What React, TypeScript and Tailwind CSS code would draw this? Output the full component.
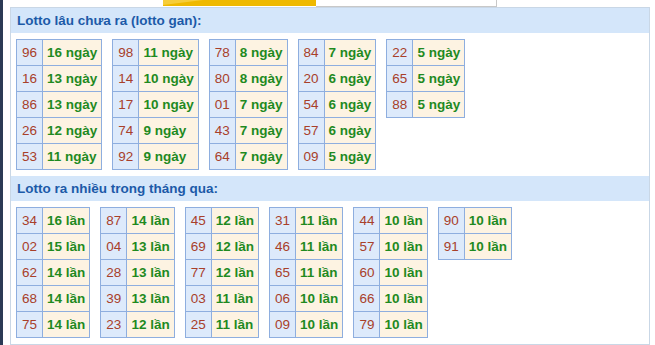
const gan: [string, string][][] = [
  [["96", "16"], ["16", "13"], ["86", "13"], ["26", "12"], ["53", "11"]],
  [["98", "11"], ["14", "10"], ["17", "10"], ["74", "9"], ["92", "9"]],
  [["78", "8"], ["80", "8"], ["01", "7"], ["43", "7"], ["64", "7"]],
  [["84", "7"], ["20", "6"], ["54", "6"], ["57", "6"], ["09", "5"]],
  [["22", "5"], ["65", "5"], ["88", "5"]],
]

const nhieu: [string, string][][] = [
  [["34", "16"], ["02", "15"], ["62", "14"], ["68", "14"], ["75", "14"]],
  [["87", "14"], ["04", "13"], ["28", "13"], ["39", "13"], ["23", "12"]],
  [["45", "12"], ["69", "12"], ["77", "12"], ["03", "11"], ["25", "11"]],
  [["31", "11"], ["46", "11"], ["65", "11"], ["06", "10"], ["09", "10"]],
  [["44", "10"], ["57", "10"], ["60", "10"], ["66", "10"], ["79", "10"]],
  [["90", "10"], ["91", "10"]],
]

function LottoTable({ rows, unit }: { rows: [string, string][]; unit: string }) {
  return (
    <table className="border-collapse self-start">
      <tbody>
        {rows.map(([num, count], i) => (
          <tr key={i} className="h-[26px]">
            <td className="border border-[#8eaedf] bg-[#ddeafb] px-[5px] text-[#a8402a]">{num}</td>
            <td className="border border-[#8eaedf] bg-[#fdf3e2] px-[4px] font-bold text-[#1f8a1f]">
              {count} {unit}
            </td>
          </tr>
        ))}
      </tbody>
    </table>
  )
}

function Section({ title, tables, unit }: { title: string; tables: [string, string][][]; unit: string }) {
  return (
    <div>
      <div className="flex h-[25px] items-center bg-[#d4e6fa] px-[6px] text-[13.5px] font-bold text-[#1c5aa8]">
        {title}
      </div>
      <div className="flex gap-[10px] px-[5px] pt-[6px] pb-[6px]">
        {tables.map((t, i) => (
          <LottoTable key={i} rows={t} unit={unit} />
        ))}
      </div>
    </div>
  )
}

export default function App() {
  return (
    <div className="relative h-[345px] w-[655px] overflow-hidden bg-white font-['Liberation_Sans',Arial,sans-serif] text-[13.5px] leading-[16px]">
      {/* left dark strip */}
      <div className="absolute left-0 top-0 h-full w-[3px] bg-[#2b3a55]" />

      {/* top leftovers of the previous block */}
      <div className="flex h-[7px]">
        <div className="w-[163px]" />
        <div className="relative h-[6px] w-[153px] overflow-hidden bg-[#efb900]">
          <div className="absolute left-0 top-0 h-0 w-0 border-r-[40px] border-t-[5px] border-r-transparent border-t-[#f6cd3a]" />
        </div>
        <div className="h-[7px] w-[181px] border-b border-r border-[#c8c8c8]" />
      </div>

      <div className="ml-[10px] w-[640px] border border-[#c9d7e6] bg-white">
        <Section title="Lotto lâu chưa ra (lotto gan):" tables={gan} unit="ngày" />
        <Section title="Lotto ra nhiều trong tháng qua:" tables={nhieu} unit="lần" />
      </div>
    </div>
  )
}
